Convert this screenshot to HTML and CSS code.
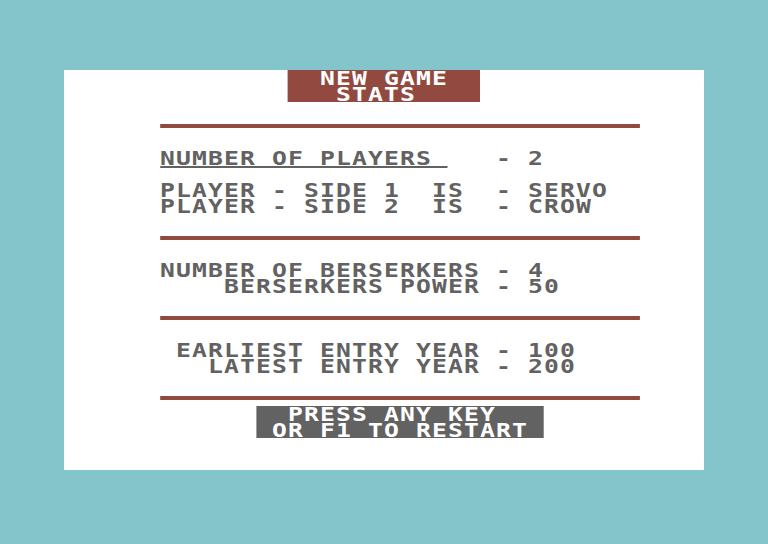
FILE: index.html
```html
<!DOCTYPE html>
<html lang="en">
<head>
<meta charset="UTF-8">
<title>New Game Stats</title>
<link rel="stylesheet" href="styles.css">
</head>
<body>
<div class="screen">
  <div class="text-grid">
    <div class="row">              <span class="rev red">  NEW GAME  </span></div>
    <div class="row">              <span class="rev red">   STATS    </span></div>
    <div class="row"></div>
    <div class="row rule"></div>
    <div class="row"></div>
    <div class="row">      <span class="ul">NUMBER OF PLAYERS </span>   - 2</div>
    <div class="row"></div>
    <div class="row">      PLAYER - SIDE 1  IS  - SERVO</div>
    <div class="row">      PLAYER - SIDE 2  IS  - CROW</div>
    <div class="row"></div>
    <div class="row rule"></div>
    <div class="row"></div>
    <div class="row">      NUMBER OF BERSERKERS - 4</div>
    <div class="row">          BERSERKERS POWER - 50</div>
    <div class="row"></div>
    <div class="row rule"></div>
    <div class="row"></div>
    <div class="row">       EARLIEST ENTRY YEAR - 100</div>
    <div class="row">         LATEST ENTRY YEAR - 200</div>
    <div class="row"></div>
    <div class="row rule"></div>
    <div class="row">            <span class="rev grey">  PRESS ANY KEY   </span></div>
    <div class="row">            <span class="rev grey"> OR F1 TO RESTART </span></div>
  </div>
</div>
</body>
</html>
```

FILE: styles.css
```css
:root {
  --cyan: #84C5CC;
  --red: #924A40;
  --grey: #626262;
  /* 40x25 character screen, 16px cells; glyphs are stretched sideways */
  --stretch: 1.3;
  --cw: calc(16px / var(--stretch));
}
body {
  margin: 0;
  height: 544px;
  background-color: var(--cyan);
  display: flex;
  justify-content: center;
  padding-top: 70px;
  box-sizing: border-box;
  overflow: hidden;
}
.screen {
  width: 640px;
  height: 400px;
  background-color: #fff;
  overflow: hidden;
}
.text-grid {
  width: calc(40 * var(--cw));
  transform: scaleX(var(--stretch));
  transform-origin: 0 0;
  font-family: "DejaVu Sans Mono", "Liberation Mono", monospace;
  font-weight: bold;
  font-size: 19px;
  line-height: 16px;
  letter-spacing: calc(var(--cw) - 1ch);
  color: var(--grey);
}
.row {
  height: 16px;
  white-space: pre;
}
.rev {
  display: inline-block;
  height: 16px;
  color: #fff;
  vertical-align: top;
}
.red {
  background-color: var(--red);
}
.grey {
  background-color: var(--grey);
}
.ul {
  display: inline-block;
  height: 16px;
  vertical-align: top;
  box-shadow: 0 2px 0 var(--grey);
}
.rule {
  box-sizing: border-box;
  padding-top: 6px;
}
.rule::before {
  content: "";
  display: block;
  margin-left: calc(6 * var(--cw));
  width: calc(30 * var(--cw));
  height: 4px;
  background-color: var(--red);
}
```
